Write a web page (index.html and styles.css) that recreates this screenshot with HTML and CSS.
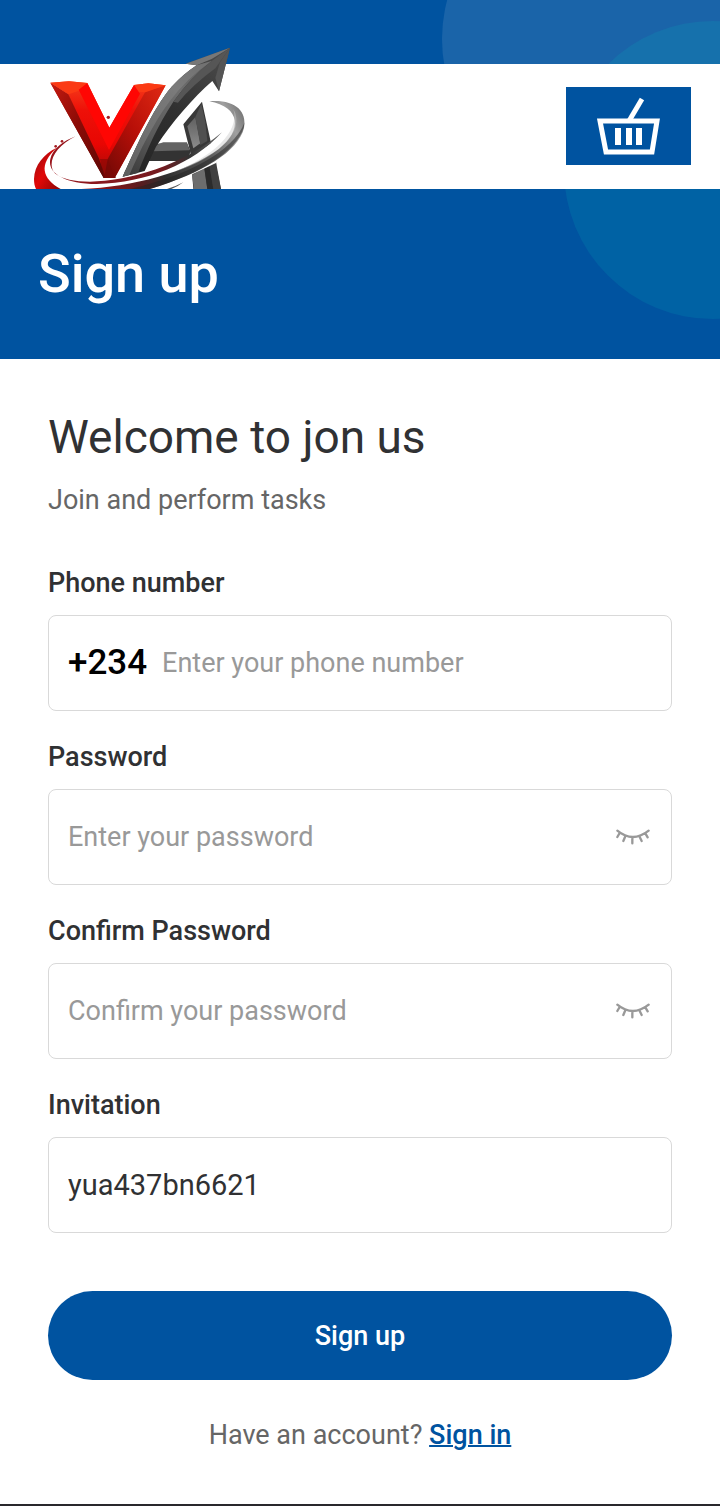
FILE: index.html
```html
<!DOCTYPE html>
<html lang="en">
<head>
<meta charset="utf-8">
<meta name="viewport" content="width=device-width, initial-scale=1">
<title>Sign up</title>
<link rel="stylesheet" href="styles.css">
</head>
<body>
<div class="hero">
  <span class="circle circle-light"></span>
  <span class="circle circle-teal"></span>
  <header class="topbar">
    <svg class="logo" viewBox="0 0 720 462" role="img" aria-label="VA">
      <defs>
        <linearGradient id="redLeft" x1="0" y1="0" x2="1" y2="1"><stop offset="0" stop-color="#c51a10"/><stop offset=".45" stop-color="#8d0b06"/><stop offset="1" stop-color="#5c0805"/></linearGradient>
        <linearGradient id="redMain" x1="0" y1="0" x2="0" y2="1"><stop offset="0" stop-color="#f5401c"/><stop offset=".3" stop-color="#ee1008"/><stop offset=".65" stop-color="#e80603"/><stop offset="1" stop-color="#9c0b08"/></linearGradient>
        <linearGradient id="redRight" x1="1" y1="0" x2="0" y2="1"><stop offset="0" stop-color="#e02a14"/><stop offset=".5" stop-color="#b80f08"/><stop offset="1" stop-color="#6d0805"/></linearGradient>
        <linearGradient id="shaft" gradientUnits="userSpaceOnUse" x1="600" y1="60" x2="320" y2="420"><stop offset="0" stop-color="#555"/><stop offset=".35" stop-color="#6e6e6e"/><stop offset=".7" stop-color="#5a5a5a"/><stop offset="1" stop-color="#3a3a3a"/></linearGradient>
        <linearGradient id="shaftDark" gradientUnits="userSpaceOnUse" x1="600" y1="60" x2="350" y2="410"><stop offset="0" stop-color="#4a4a4a"/><stop offset=".5" stop-color="#303030"/><stop offset="1" stop-color="#252525"/></linearGradient>
        <linearGradient id="leg" x1="0" y1="0" x2="0" y2="1"><stop offset="0" stop-color="#606060"/><stop offset="1" stop-color="#8c8c8c"/></linearGradient>
        <linearGradient id="ring" gradientUnits="userSpaceOnUse" x1="180" y1="460" x2="680" y2="230"><stop offset="0" stop-color="#a81217"/><stop offset=".3" stop-color="#5c1b1e"/><stop offset=".45" stop-color="#2e2e2e"/><stop offset=".72" stop-color="#5a5a5a"/><stop offset=".9" stop-color="#a0a0a0"/><stop offset="1" stop-color="#6c6c6c"/></linearGradient>
        <linearGradient id="ringLeft" x1="0" y1="0" x2="1" y2="1"><stop offset="0" stop-color="#8b0c10"/><stop offset=".5" stop-color="#e20808"/><stop offset="1" stop-color="#8a0606"/></linearGradient>
        <linearGradient id="streak" gradientUnits="userSpaceOnUse" x1="90" y1="0" x2="610" y2="0"><stop offset="0" stop-color="#9a141b"/><stop offset=".65" stop-color="#741b20"/><stop offset=".8" stop-color="#333"/><stop offset="1" stop-color="#666"/></linearGradient>
      </defs>
      <!-- right leg of the A -->
      <path fill="#383838" d="M546 200 490 268 511 352 520 462H603L571 315Z"/>
      <path fill="url(#leg)" d="M502 274 526 246 541 325 520 340Z"/>
      <path fill="#505050" d="M526 246 544 206 556 262 562 318 541 330Z"/>
      <path fill="#6d6d6d" d="M516 420 553 400 562 462H522Z"/>
      <path fill="#2b2b2b" d="M553 400 568 390 580 462H562Z"/>
      <path fill="#404040" d="M568 390 588 380 603 462H580Z"/>
      <!-- crossbar -->
      <path fill="#333" d="M392 348 410 326H502L512 350 500 378H372Z"/>
      <path fill="#636363" d="M406 330 430 322H501L508 346 398 349Z"/>
      <!-- arrow -->
      <path fill="url(#shaftDark)" d="M630 38 597 169 577 138C520 188 455 262 408 335L374 408 308 425C345 345 395 225 455 155Q492 116 530 91L497 86Z"/>
      <path fill="url(#shaft)" d="M308 425C345 345 395 225 455 155Q492 116 530 91L575 78Q510 130 460 200C415 268 380 345 354 414Z"/>
      <path fill="#8c8c8c" opacity=".45" d="M530 91 575 78Q500 130 448 200C400 265 360 345 328 420L308 425C345 345 395 225 455 155Q492 116 530 91Z"/>
      <path fill="#777" d="M497 86 630 38 575 72 530 91Z"/>
      <path fill="#565656" d="M630 38 575 78Q510 130 460 200L474 203Q520 148 586 100Z"/>
      <path fill="#555" d="M630 38 600 82 586 128 597 169Z"/>
      <!-- V -->
      <path fill="url(#redLeft)" d="M91 143 143 178 240 372 288 429H251Z"/>
      <path fill="url(#redMain)" d="M91 143 147 139 202 144 268 278 342 150 385 145 437 151 284 429H252L230 370 143 178Z"/>
      <path fill="url(#redLeft)" d="M91 143 145 178 236 368 258 429H251Z"/>
      <path fill="url(#redRight)" d="M437 151 284 429H252L263 372 376 170Z"/>
      <path fill="#fb3a14" d="M91 143 147 139 202 144 186 164 146 178ZM342 150 385 145 437 151 376 172 352 170Z"/>
      <path fill="#ff0603" d="M202 144 268 278 342 150 360 176 267 345 176 164Z"/>
      <path fill="#7b0805" d="M240 372 263 372 284 429H252Z" opacity=".55"/>
      <!-- orbit -->
      <path fill="#fff" d="M180 452C340 450 500 392 602 300L640 290 588 384 512 420 400 470H180Z"/>
      <path fill="url(#streak)" d="M167 304C104 334 78 388 106 416C176 470 440 434 606 292C520 386 380 444 230 447C130 446 82 412 91 372C98 342 130 318 167 304Z"/>
      <path fill="url(#ringLeft)" d="M110 338C72 357 43 389 42 432C42 444 44 453 48 462H122C66 430 55 389 110 338Z"/>
      <path fill="url(#ring)" d="M568 199C642 193 682 226 672 279C654 350 550 413 390 462H184C340 456 500 412 596 342C668 286 662 216 568 199Z"/>
      <path fill="#222" opacity=".5" d="M674 262C666 340 550 413 390 462H330C500 424 640 350 674 262Z"/>
      <path fill="#ccc" opacity=".45" d="M640 222C680 290 590 370 460 412C580 364 660 290 640 222Z"/>
      <path fill="#555" d="M441 462Q468 454 490 442Q472 456 454 462Z"/>
      <g fill="#a51d22"><circle cx="265" cy="247" r="5"/><circle cx="126" cy="319" r="4"/><circle cx="107" cy="334" r="4"/></g>
    </svg>
    <button class="basket" type="button" aria-label="Basket">
      <svg viewBox="0 0 125 78" fill="none" stroke="#fff">
        <path stroke-width="5" d="M34 34H91L86 65H40Z"/>
        <path stroke-width="5" d="M63 34 76 12"/>
        <path stroke-width="6" d="M52 41V58M63 41V58M73 41V58"/>
      </svg>
    </button>
  </header>
  <h1 class="page-title">Sign up</h1>
</div>
<main class="content">
  <h2 class="welcome">Welcome to jon us</h2>
  <p class="intro">Join and perform tasks</p>
  <form class="form">
    <div class="field">
      <label for="phone">Phone number</label>
      <div class="control"><span class="prefix">+234</span><input id="phone" type="tel" placeholder="Enter your phone number"></div>
    </div>
    <div class="field">
      <label for="password">Password</label>
      <div class="control"><input id="password" type="password" placeholder="Enter your password">
        <button class="eye" type="button" aria-label="Show password"><svg viewBox="0 0 108 60"><path d="M7 11Q53 49 101 11M14 18 7 30M31 28 25 42M52 31V49M73 28 80 42M91 19 98 31"/></svg></button></div>
    </div>
    <div class="field">
      <label for="confirm">Confirm Password</label>
      <div class="control"><input id="confirm" type="password" placeholder="Confirm your password">
        <button class="eye" type="button" aria-label="Show password"><svg viewBox="0 0 108 60"><path d="M7 11Q53 49 101 11M14 18 7 30M31 28 25 42M52 31V49M73 28 80 42M91 19 98 31"/></svg></button></div>
    </div>
    <div class="field">
      <label for="invitation">Invitation</label>
      <div class="control"><input class="code" id="invitation" type="text" value="yua437bn6621"></div>
    </div>
    <button class="submit" type="submit">Sign up</button>
  </form>
  <p class="signin">Have an account? <a href="#">Sign in</a></p>
</main>
</body>
</html>
```
FILE: styles.css
```css
* { box-sizing: border-box; }

body {
  margin: 0;
  background: #fff;
  color: #303133;
  font-family: Roboto, "Liberation Sans", sans-serif;
  font-size: 27px;
  line-height: 32px;
}

h1, h2, p { margin: 0; font-weight: 400; }

button, input { font: inherit; }

.hero {
  position: relative;
  overflow: hidden;
  padding-top: 64px;
  background: #0053a0;
}

.circle {
  position: absolute;
  width: 298px;
  height: 298px;
  border-radius: 50%;
}

.circle-light { top: -110px; right: -20px; background: rgba(255, 255, 255, .1); }
.circle-teal { top: 21px; right: -142px; background: rgba(0, 200, 190, .13); }

.topbar {
  position: relative;
  display: flex;
  align-items: flex-start;
  justify-content: space-between;
  height: 125px;
  padding: 23px 29px 0 20px;
  background: #fff;
}

.logo {
  align-self: flex-end;
  flex: none;
  width: 240px;
  height: 154px;
}

.basket {
  width: 125px;
  height: 78px;
  padding: 0;
  border: 0;
  background: #0053a0;
}

.basket svg { display: block; width: 100%; }

.page-title {
  position: relative;
  padding: 53px 38px;
  color: #fff;
  font-size: 54px;
  font-weight: 500;
  line-height: 64px;
}

.content {
  padding: 50px 48px 53px;
  border-bottom: 2px solid #29282c;
}

.welcome { font-size: 46px; line-height: 56px; }

.intro { margin-top: 19px; color: #666; }

.form { margin-top: 51px; }

.field { margin-bottom: 30px; }

.field label {
  display: block;
  margin-bottom: 16px;
  font-weight: 500;
}

.control {
  display: flex;
  align-items: center;
  height: 96px;
  padding: 0 20px 0 19px;
  border: 1px solid #d9d9d9;
  border-radius: 8px;
}

.control input {
  flex: 1;
  min-width: 0;
  height: 100%;
  padding: 0;
  border: 0;
  outline: 0;
  background: none;
  color: #303133;
}

.control input::placeholder { color: #999; opacity: 1; }

.control .code { font-size: 29px; }

.prefix {
  margin-right: 15px;
  color: #000;
  font-size: 35px;
  font-weight: 500;
}

.eye {
  width: 36px;
  height: 20px;
  padding: 0;
  border: 0;
  background: none;
}

.eye svg { display: block; width: 100%; }

.eye path {
  fill: none;
  stroke: #999;
  stroke-width: 7;
  stroke-linecap: round;
}

.submit {
  width: 100%;
  height: 89px;
  margin-top: 28px;
  border: 0;
  border-radius: 45px;
  background: #0053a0;
  color: #fff;
  font-weight: 500;
}

.signin {
  margin-top: 39px;
  color: #666;
  text-align: center;
}

.signin a {
  color: #0053a0;
  font-weight: 500;
  text-decoration-thickness: 2px;
}
```
